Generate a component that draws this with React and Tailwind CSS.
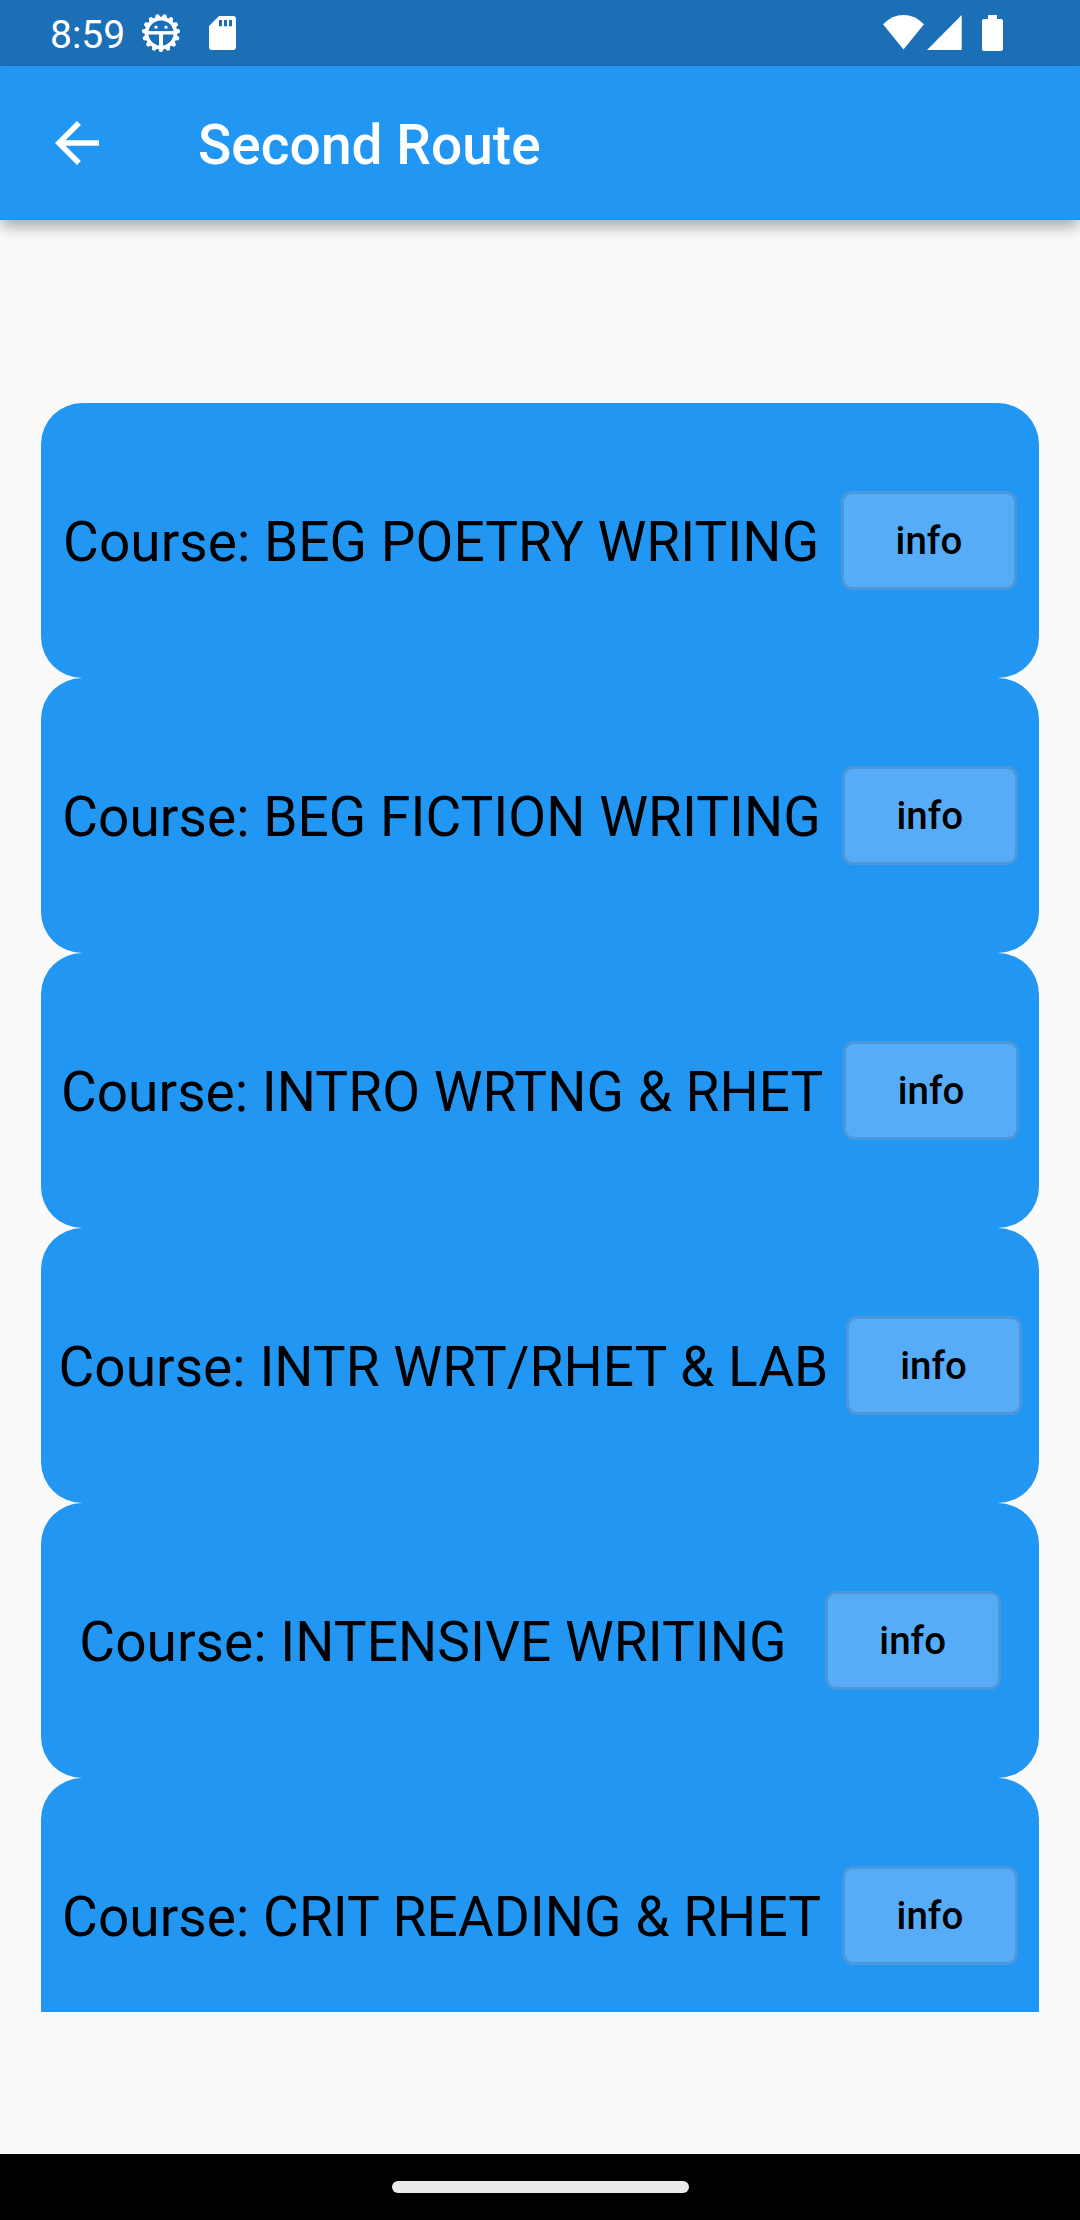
const courses = [
  'BEG POETRY WRITING',
  'BEG FICTION WRITING',
  'INTRO WRTNG & RHET',
  'INTR WRT/RHET & LAB',
  'INTENSIVE WRITING',
  'CRIT READING & RHET',
];

const teeth = Array.from({ length: 15 }, (_, i) => i * 24 + 12);

function GearIcon() {
  return (
    <svg className="h-10 w-10" viewBox="-20 -20 40 40" fill="none" stroke="white">
      <circle r="14.4" strokeWidth="3.6" />
      {teeth.map((a) => (
        <path key={a} d="M-2.5-15L-1.1-18.500H1.100L2.500-15Z" fill="white" strokeWidth="1" strokeLinejoin="round" transform={`rotate(${a})`} />
      ))}
      <path d="M-13-0.200H13" strokeWidth="3.4" />
      <path d="M0 0V14" strokeWidth="4" />
      <circle cx="-5" cy="-5.800" r="1.600" fill="white" stroke="none" />
      <circle cx="5" cy="-5.800" r="1.600" fill="white" stroke="none" />
    </svg>
  );
}

function StatusBar() {
  return (
    <div className="flex h-[66px] items-start bg-[#1a6fb6] pl-[50px] text-white">
      <span className="mt-3 w-[91px] text-[39px] leading-[46px] whitespace-nowrap">8:59</span>
      <div className="mt-[13px]">
        <GearIcon />
      </div>
      <svg className="mt-4 ml-7 h-[34px] w-[27px]" viewBox="0 0 27 34" fill="white">
        <path fillRule="evenodd" d="M10 0H24Q27 0 27 3V31Q27 34 24 34H3Q0 34 0 31V10ZM10 4V10.300H13V4ZM15 4V10.300H18V4ZM20 4V10.300H23V4Z" />
      </svg>
      <svg className="mt-[15px] ml-auto h-[35px] w-[41px]" viewBox="0 0 41 35" fill="white">
        <path d="M0 9.300Q9 0 20.500 0T41 9.300L20.500 34.500Z" />
      </svg>
      <svg className="mt-[15px] ml-[3px] h-[35px] w-[35px]" viewBox="0 0 35 35" fill="white">
        <path d="M0 35L34.700 0V35Z" />
      </svg>
      <svg className="mt-[15px] mr-[77px] ml-5 h-9 w-[21px]" viewBox="0 0 21 36" fill="white">
        <path d="M6 0H15V4H19Q21 4 21 6V34Q21 36 19 36H2Q0 36 0 34V6Q0 4 2 4H6Z" />
      </svg>
    </div>
  );
}

function CourseCard({ name }) {
  return (
    <div className="flex h-[275px] shrink-0 items-center justify-evenly rounded-[41.25px] bg-[#2196f3]">
      <span className="pt-[3px] text-[55px] leading-[64px] tracking-[0.04px] whitespace-nowrap">Course: {name}</span>
      <button className="h-[99px] w-[176px] rounded-[11px] border-[3px] border-black/12 bg-[#57acf8] text-[38.5px] leading-[45px] font-medium">
        info
      </button>
    </div>
  );
}

export default function App() {
  return (
    <div className="flex h-[2220px] w-[1080px] flex-col overflow-hidden bg-[#fafafa] font-['Roboto',sans-serif] text-black">
      <StatusBar />
      <header className="flex h-[154px] items-center bg-[#2196f3] pl-[55px] text-white shadow-[0_8px_14px_-1px_rgba(0,0,0,0.32)]">
        <svg className="h-11 w-11" viewBox="4 4 16 16" fill="white">
          <path d="M20 11H7.830l5.590-5.590L12 4l-8 8 8 8 1.410-1.410L7.830 13H20v-2z" />
        </svg>
        <h1 className="ml-[99px] pt-1 text-[55px] leading-[64px] font-medium tracking-[0.05px] whitespace-nowrap">Second Route</h1>
      </header>
      <main className="h-[1934px] px-[41.25px] pt-[183px]">
        <div className="flex h-[1609px] flex-col overflow-hidden">
          {courses.map((name) => (
            <CourseCard key={name} name={name} />
          ))}
        </div>
      </main>
      <footer className="flex h-[66px] justify-center bg-black pt-[27px]">
        <div className="h-3 w-[297px] rounded-full bg-[#ebebeb]" />
      </footer>
    </div>
  );
}
